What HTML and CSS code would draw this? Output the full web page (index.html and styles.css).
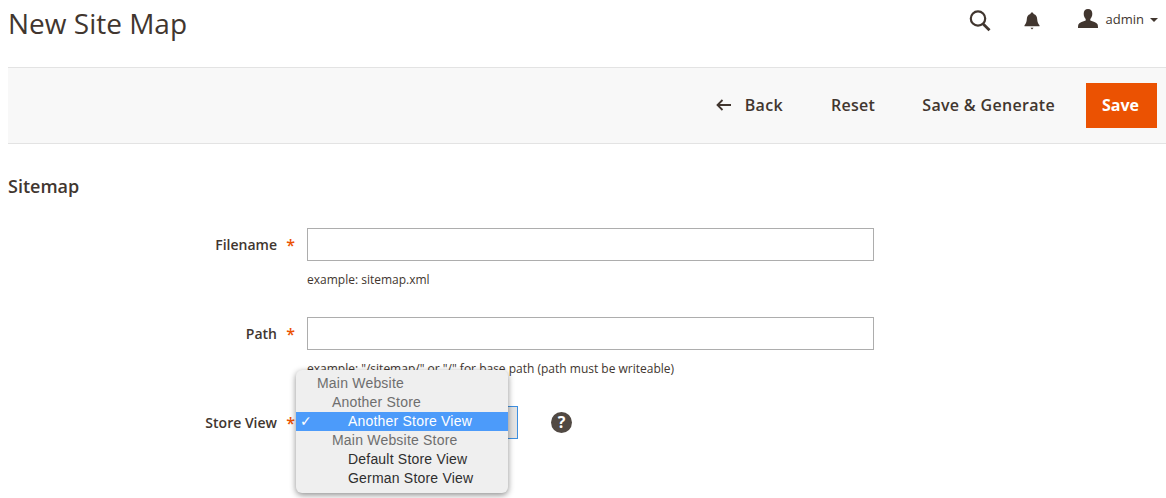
FILE: index.html
```html
<!DOCTYPE html>
<html lang="en">
<head>
    <meta charset="UTF-8">
    <title>New Site Map</title>
    <link rel="stylesheet" href="styles.css">
</head>
<body>
    <div class="page">
        <header class="top">
            <h1 class="title">New Site Map</h1>
            <div class="top-actions">
                <svg class="icon-search" width="24" height="24" viewBox="0 0 24 24"><circle cx="10" cy="9.500" r="7.200" fill="none" stroke="#41362f" stroke-width="2.200"/><path d="M15.200 15l6.300 6.300" fill="none" stroke="#41362f" stroke-width="2.800"/></svg>
                <svg class="icon-bell" width="16" height="18" viewBox="0 0 16 18"><path d="M8 0.500c1 0 1.500.6 1.600 1.500 2.600.7 3.500 2.900 3.600 5.300.1 2.600.8 4.200 2.300 6v1H.5v-1c1.500-1.800 2.200-3.400 2.300-6 .1-2.400 1-4.600 3.600-5.300C6.500 1.100 7 .5 8 .5z" fill="#41362f"/><path d="M6.500 15.800h3L8 17.500z" fill="#41362f"/></svg>
                <div class="user">
                    <svg width="20" height="19" viewBox="0 0 20 19"><path d="M10 0c2.800 0 4.300 2 4.300 4.800 0 2.300-.9 4.200-2 5.300v1.500c2.500 1 6.200 2 7.200 3.600.4.800.5 2.300.5 3.800H0c0-1.500.1-3 .5-3.800 1-1.600 4.700-2.600 7.200-3.600v-1.500c-1.100-1.100-2-3-2-5.300C5.700 2 7.200 0 10 0z" fill="#41362f"/></svg>
                    <span class="user-name">admin</span>
                    <span class="caret"></span>
                </div>
            </div>
        </header>

        <div class="action-bar">
            <button class="action back">
                <svg width="15" height="12" viewBox="0 0 15 12"><path d="M6.500 1L1.500 6l5 5M1.500 6H15" fill="none" stroke="#41362f" stroke-width="1.800"/></svg>
                Back
            </button>
            <button class="action">Reset</button>
            <button class="action">Save &amp; Generate</button>
            <button class="save">Save</button>
        </div>

        <h2 class="section">Sitemap</h2>

        <form class="form">
            <div class="field">
                <label class="field-label">Filename</label>
                <div class="field-control">
                    <input class="input" type="text">
                    <div class="note">example: sitemap.xml</div>
                </div>
            </div>
            <div class="field">
                <label class="field-label">Path</label>
                <div class="field-control">
                    <input class="input" type="text">
                    <div class="note">example: "/sitemap/" or "/" for base path (path must be writeable)</div>
                </div>
            </div>
            <div class="field">
                <label class="field-label">Store View</label>
                <div class="field-control store-row">
                    <div class="select-box"></div>
                    <span class="help">?</span>
                    <ul class="menu">
                        <li class="group">Main Website</li>
                        <li class="group sub">Another Store</li>
                        <li class="option selected"><span class="check">✓</span>Another Store View</li>
                        <li class="group sub">Main Website Store</li>
                        <li class="option">Default Store View</li>
                        <li class="option">German Store View</li>
                    </ul>
                </div>
            </div>
        </form>
    </div>
</body>
</html>
```

FILE: styles.css
```css
body {
    margin: 0;
    background-color: #fff;
    color: #41362f;
    font-family: 'Open Sans', sans-serif;
    overflow: hidden;
}
.page {
    padding-left: 8px;
    height: 498px;
    overflow: hidden;
}
.top {
    display: flex;
    justify-content: space-between;
    height: 67px;
}
.title {
    margin: 0;
    font-size: 28px;
    font-weight: 400;
    line-height: 47px;
    color: #41362f;
}
.top-actions {
    display: flex;
    align-items: flex-start;
    padding-top: 9px;
    padding-right: 8px;
}
.icon-bell {
    margin-left: 32px;
    margin-top: 3px;
}
.user {
    display: flex;
    align-items: center;
    margin-left: 38px;
    height: 19px;
}
.user-name {
    font-size: 13px;
    margin-left: 8px;
    color: #41362f;
}
.caret {
    width: 0;
    height: 0;
    margin-left: 6px;
    margin-top: 2px;
    border-left: 4px solid transparent;
    border-right: 4px solid transparent;
    border-top: 4px solid #41362f;
}
.action-bar {
    display: flex;
    align-items: center;
    justify-content: flex-end;
    height: 75px;
    padding-right: 9px;
    background-color: #f8f8f8;
    border-top: 1px solid #e3e3e3;
    border-bottom: 1px solid #e3e3e3;
}
.action {
    display: flex;
    align-items: center;
    margin-right: 31px;
    padding: 0 0 2px;
    background: none;
    border: none;
    color: #41362f;
    font-family: 'Open Sans', sans-serif;
    font-size: 16px;
    font-weight: 600;
    letter-spacing: .32px;
}
.action.back svg {
    margin-right: 14px;
}
.action:nth-child(2) {
    margin-right: 47px;
}
.action.back {
    margin-right: 48px;
}
.save {
    width: 71px;
    height: 45px;
    padding: 0 2px 2px 0;
    background-color: #eb5202;
    border: none;
    color: #fff;
    font-family: 'Open Sans', sans-serif;
    font-size: 16px;
    font-weight: 700;
}
.section {
    margin: 31px 0 0;
    font-size: 18px;
    font-weight: 600;
    line-height: 22px;
    color: #41362f;
}
.form {
    margin-top: 31px;
}
.field {
    display: flex;
    margin-bottom: 28px;
}
.field-label {
    width: 269px;
    text-align: right;
    font-size: 14px;
    font-weight: 600;
    line-height: 33px;
    color: #41362f;
    position: relative;
}
.field-label::after {
    content: '*';
    position: absolute;
    right: -18px;
    top: 1px;
    color: #eb5202;
    font-size: 16px;
}
.field-control {
    margin-left: 30px;
    width: 567px;
}
.input {
    display: block;
    box-sizing: border-box;
    width: 567px;
    height: 33px;
    background-color: #fff;
    border: 1px solid #adadad;
}
.note {
    margin-top: 10px;
    font-size: 12px;
    line-height: 18px;
    color: #41362f;
}
.store-row {
    position: relative;
    display: flex;
    align-items: center;
    height: 33px;
}
.select-box {
    box-sizing: border-box;
    width: 211px;
    height: 33px;
    background-color: #e3e3e3;
    border: 1px solid #3d8fe0;
}
.help {
    display: block;
    width: 21px;
    height: 21px;
    margin-left: 33px;
    border-radius: 50%;
    background-color: #514943;
    color: #fff;
    font-size: 16px;
    font-weight: 700;
    line-height: 21px;
    text-align: center;
}
.menu {
    position: absolute;
    left: -11px;
    top: -36px;
    box-sizing: border-box;
    width: 212px;
    height: 123px;
    margin: 0;
    padding: 4px 0;
    list-style: none;
    background-color: #efefef;
    border-radius: 6px;
    box-shadow: 0 2px 6px rgba(0, 0, 0, .45);
    font-family: 'Liberation Sans', sans-serif;
    font-size: 14px;
    letter-spacing: .2px;
    line-height: 19px;
}
.menu li {
    position: relative;
    white-space: nowrap;
    height: 19px;
}
.group {
    padding-left: 21px;
    color: #6e6e6e;
}
.group.sub {
    padding-left: 36px;
}
.option {
    padding-left: 52px;
    color: #2e2e2e;
}
.option.selected {
    background-color: #4c9bfa;
    color: #fff;
}
.check {
    position: absolute;
    left: 4px;
    top: 0;
    font-family: 'DejaVu Sans', sans-serif;
    font-size: 14px;
    font-weight: 700;
}
```
